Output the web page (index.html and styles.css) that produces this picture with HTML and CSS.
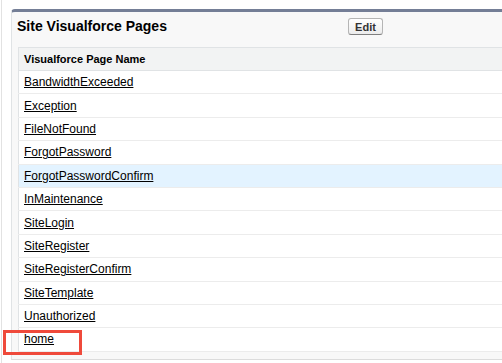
FILE: index.html
```html
<!DOCTYPE html>
<html lang="en">
<head>
    <meta charset="UTF-8">
    <meta name="viewport" content="width=device-width, initial-scale=1.0">
    <title>Site Visualforce Pages</title>
    <link rel="stylesheet" href="styles.css">
</head>
<body>
    <div class="page">
        <div class="block">
            <div class="block-header">
                <h2 class="block-title">Site Visualforce Pages</h2>
                <button class="btn">Edit</button>
            </div>
            <table class="list">
                <thead>
                    <tr><th>Visualforce Page Name</th></tr>
                </thead>
                <tbody>
                    <tr><td><a href="#">BandwidthExceeded</a></td></tr>
                    <tr><td><a href="#">Exception</a></td></tr>
                    <tr><td><a href="#">FileNotFound</a></td></tr>
                    <tr><td><a href="#">ForgotPassword</a></td></tr>
                    <tr class="hover"><td><a href="#">ForgotPasswordConfirm</a></td></tr>
                    <tr><td><a href="#">InMaintenance</a></td></tr>
                    <tr><td><a href="#">SiteLogin</a></td></tr>
                    <tr><td><a href="#">SiteRegister</a></td></tr>
                    <tr><td><a href="#">SiteRegisterConfirm</a></td></tr>
                    <tr><td><a href="#">SiteTemplate</a></td></tr>
                    <tr><td><a href="#">Unauthorized</a></td></tr>
                    <tr><td><a href="#">home</a></td></tr>
                </tbody>
            </table>
        </div>
    </div>
    <!-- annotation box around the new page -->
    <div class="callout"></div>
</body>
</html>
```

FILE: styles.css
```css
body {
    font-family: "Liberation Sans", Arial, sans-serif;
    margin: 0;
    padding: 0 0 0 1px;
    background: white;
    color: #000;
    height: 363px;
    overflow: hidden;
    position: relative;
}

.page {
    border-left: 1px solid #e2e2e2;
    padding: 9px 0 0 9px;
    height: 100%;
    box-sizing: border-box;
}

.block {
    background-color: #f8f8f8;
    border-top: 3px solid #747e96;
    border-left: 1px solid #e0e3e5;
    border-bottom: 1px solid #dcdcdc;
    border-radius: 4px 0 0 0;
    padding-bottom: 7px;
}

.block-header {
    display: flex;
    align-items: flex-start;
    height: 35px;
    box-sizing: border-box;
    padding: 6px 0 0 5px;
}

.block-title {
    flex: 0 0 331px;
    margin: 0;
    font-size: 14px;
    line-height: 17px;
    font-weight: bold;
}

.btn {
    font-family: inherit;
    font-size: 11px;
    font-weight: bold;
    color: #333;
    height: 17px;
    width: 35px;
    padding: 0;
    border: 1px solid #b5b5b5;
    border-bottom-color: #7f7f7f;
    border-radius: 3px;
    background: linear-gradient(#ffffff, #ececec);
}

.list {
    margin-left: 6px;
    width: calc(100% - 6px);
    border-collapse: collapse;
    background: white;
    border-left: 1px solid #e0e3e5;
}

.list th {
    text-align: left;
    font-size: 11px;
    font-weight: bold;
    height: 23px;
    box-sizing: border-box;
    padding: 0 0 0 5px;
    background-color: #f2f3f3;
    border-top: 1px solid #e0e3e5;
    border-bottom: 1px solid #e0e3e5;
}

.list td {
    height: 23.4px;
    box-sizing: border-box;
    padding: 0 0 0 5px;
    font-size: 12px;
    border-bottom: 1px solid #ececec;
}

.list tr.hover td {
    background-color: #e3f3ff;
}

.list a {
    color: #000;
    text-decoration: underline;
}

.callout {
    position: absolute;
    left: 3px;
    top: 330px;
    width: 79px;
    height: 25px;
    box-sizing: border-box;
    border: 3px solid #ef4a3b;
}
```
